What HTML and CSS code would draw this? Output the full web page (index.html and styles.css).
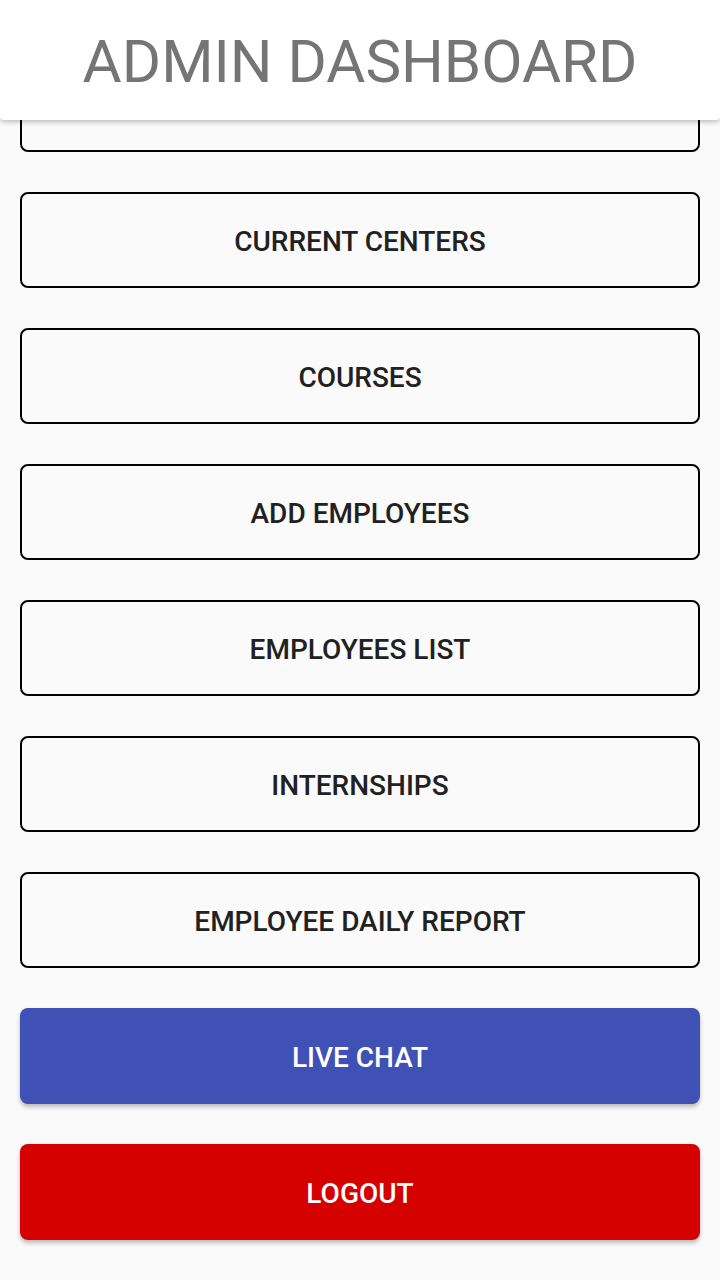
FILE: index.html
```html
<!DOCTYPE html>
<html>
<head>
<meta charset="utf-8">
<link rel="stylesheet" href="styles.css">
</head>
<body>
<header class="topbar"><h1 class="title">ADMIN DASHBOARD</h1></header>
<main class="menu">
  <button class="btn btn-outline" aria-label="hidden item"></button>
  <button class="btn btn-outline">CURRENT CENTERS</button>
  <button class="btn btn-outline">COURSES</button>
  <button class="btn btn-outline">ADD EMPLOYEES</button>
  <button class="btn btn-outline">EMPLOYEES LIST</button>
  <button class="btn btn-outline">INTERNSHIPS</button>
  <button class="btn btn-outline">EMPLOYEE DAILY REPORT</button>
  <button class="btn btn-chat">LIVE CHAT</button>
  <button class="btn btn-logout">LOGOUT</button>
</main>
</body>
</html>
```
FILE: styles.css
```css
html, body {
  margin: 0;
  padding: 0;
  background: #fafafa;
  font-family: Roboto, "Liberation Sans", sans-serif;
}
.topbar {
  position: fixed;
  top: 0;
  left: 0;
  right: 0;
  height: 120px;
  background: #ffffff;
  border-radius: 0 0 4px 4px;
  box-shadow: 0 2px 5px rgba(0,0,0,0.25);
  display: flex;
  align-items: center;
  justify-content: center;
  z-index: 2;
}
.title {
  margin: 0;
  font-weight: 400;
  font-size: 60px;
  color: #757575;
  line-height: 1;
  padding-top: 4px;
}
.menu {
  display: flex;
  flex-direction: column;
  gap: 40px;
  padding: 56px 20px 40px;
}
.btn {
  height: 96px;
  border-radius: 8px;
  font-family: Roboto, "Liberation Sans", sans-serif;
  font-weight: 500;
  font-size: 28px;
  display: flex;
  align-items: center;
  justify-content: center;
  box-sizing: border-box;
  padding: 2px 0 0;
  width: 100%;
}
.btn-outline {
  background: #fafafa;
  border: 2px solid #000000;
  color: #212121;
}
.btn-chat {
  background: #3f51b5;
  border: none;
  color: #ffffff;
  box-shadow: 0 3px 4px rgba(0,0,0,0.25);
}
.btn-logout {
  background: #d50000;
  border: none;
  color: #ffffff;
  box-shadow: 0 3px 4px rgba(0,0,0,0.25);
}
```
